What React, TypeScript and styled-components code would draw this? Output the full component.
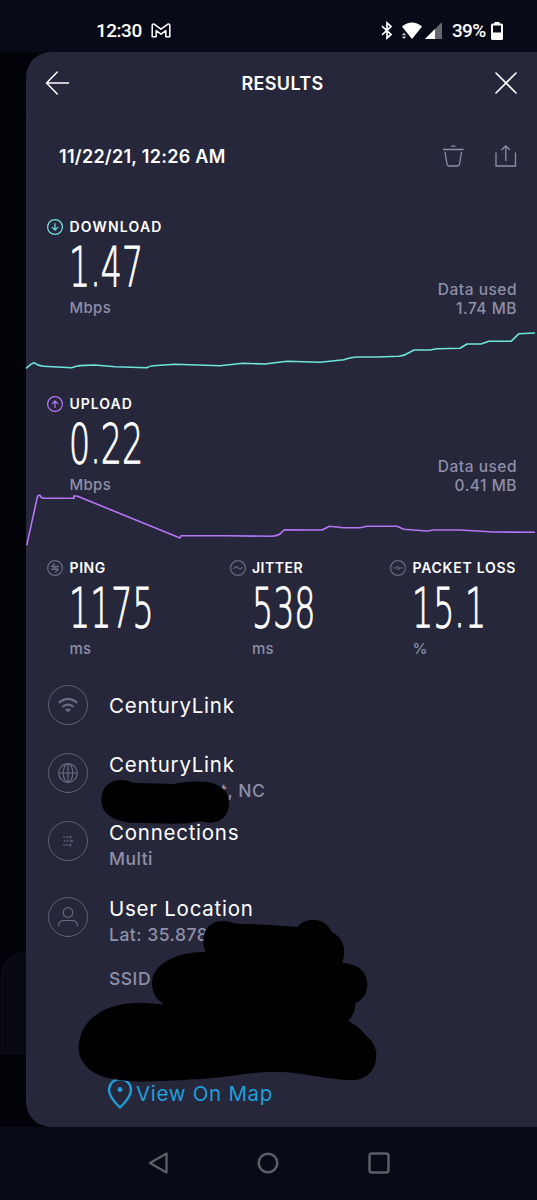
import React from "react";
import styled, { createGlobalStyle } from "styled-components";

const Global = createGlobalStyle`
  * { box-sizing: border-box; }
  body { margin: 0; background: #090a18; }
  svg { display: block; flex: none; overflow: visible; }
`;

const sans = `Inter, "Open Sans", sans-serif`;

const Phone = styled.div`
  width: 537px;
  height: 1200px;
  display: flex;
  flex-direction: column;
  overflow: hidden;
  background: #090a18;
  color: #fff;
  font-family: ${sans};
`;

const StatusBar = styled.header`
  height: 52px;
  padding: 9px 34px 0 96px;
  display: flex;
  align-items: center;
  font: 500 19px/22px Roboto, sans-serif;
`;
const Clock = styled.span`
  width: 55px;
  letter-spacing: -0.5px;
`;
const StatusIcons = styled.div`
  margin-left: auto;
  display: flex;
  align-items: center;
`;
const Battery = styled.span`
  width: 39px;
  margin-left: 10px;
  letter-spacing: -0.7px;
`;

const Stage = styled.div`
  position: relative;
  height: 1075px;
  padding-left: 26px;
  background: #020308;
`;
const BackPanel = styled.div`
  position: absolute;
  left: 1px;
  top: 900px;
  width: 60px;
  height: 102px;
  border: 1px solid #0e0f17;
  border-radius: 24px 0 0 0;
  background: #080910;
`;
const Card = styled.main`
  position: relative;
  height: 1075px;
  border-radius: 25px 0 0 25px;
  background: #26273a;
`;
const TopBar = styled.div`
  height: 63px;
  padding: 0 20px;
  display: flex;
  align-items: center;
  justify-content: space-between;
  border-bottom: 1px solid #2b2c3f;
`;
const Title = styled.h1`
  margin: 0;
  font-size: 18px;
  font-weight: 600;
  letter-spacing: 0.35px;
`;
const DateRow = styled.div`
  height: 101px;
  padding: 0 20px 19px 33px;
  display: flex;
  align-items: center;
`;
const DateText = styled.span`
  flex: 1;
  font-size: 18px;
  font-weight: 600;
  letter-spacing: 0.28px;
`;
const Actions = styled.div`
  display: flex;
  gap: 30px;
`;

const Speed = styled.section<{ $h: number }>`
  height: ${(p) => p.$h}px;
`;
const SpeedInfo = styled.div`
  height: 103px;
  padding: 0 20px 0 21px;
  display: flex;
  align-items: flex-end;
  justify-content: space-between;
`;
const Metric = styled.div`
  display: grid;
  grid-template-columns: 22.5px auto;
  grid-template-rows: 21px 59px 23px;
  align-items: center;
`;
const MetricName = styled.span<{ $spacing: number }>`
  font-size: 14px;
  font-weight: 600;
  letter-spacing: ${(p) => p.$spacing}px;
  white-space: nowrap;
`;
const MetricValue = styled.span`
  grid-column: 2;
  width: 0;
  margin-left: -0.5px;
  font: 200 55.5px/59px "DejaVu Sans", "DejaVu Sans Light", sans-serif;
  -webkit-text-stroke: 1px #fff;
  transform: scaleX(0.6);
  transform-origin: 0 50%;
  white-space: nowrap;
`;
const Unit = styled.span`
  grid-column: 2;
  padding-top: 1px;
  color: #8e8fa8;
  font-size: 15px;
  font-weight: 500;
  line-height: 22px;
  letter-spacing: 0.3px;
`;
const DataUsed = styled.div`
  padding-bottom: 1px;
  color: #8e8fa8;
  font-size: 15.5px;
  font-weight: 500;
  line-height: 19px;
  letter-spacing: 0.5px;
  text-align: right;
`;
const ChartBox = styled.div<{ $top: number }>`
  margin-top: ${(p) => p.$top}px;
`;

const Quality = styled.section`
  height: 128px;
  padding-left: 21px;
  display: grid;
  grid-template-columns: 182.5px 160.5px auto;
  align-content: start;
`;

const Details = styled.section`
  padding-left: 22px;
`;
const Detail = styled.div<{ $h: number }>`
  height: ${(p) => p.$h}px;
  display: flex;
  align-items: flex-start;
  gap: 21px;
`;
const Round = styled.div`
  width: 40px;
  height: 40px;
  display: grid;
  place-items: center;
  border: 1.5px solid #5f6177;
  border-radius: 50%;
`;
const DetailText = styled.div<{ $top: number }>`
  margin-top: ${(p) => p.$top}px;
  white-space: pre;
`;
const Name = styled.div`
  font-size: 20.5px;
  line-height: 26px;
  letter-spacing: 0.75px;
`;
const Sub = styled.div<{ $gap?: number; $indent?: number }>`
  margin-top: ${(p) => p.$gap ?? 0}px;
  padding-left: ${(p) => p.$indent ?? 0}px;
  color: #8e8fa8;
  font-size: 17.5px;
  font-weight: 500;
  line-height: 26px;
  letter-spacing: 0.5px;
`;
const MapLink = styled.a`
  margin: 6px 0 0 60px;
  display: flex;
  align-items: center;
  gap: 4px;
  color: #209fdb;
  font-size: 20.5px;
  line-height: 30px;
  letter-spacing: 0.7px;
`;
const Redaction = styled.svg`
  position: absolute;
  left: -26px;
  top: -52px;
`;

const NavBar = styled.nav`
  height: 73px;
  padding: 0 147.5px 1px 146.5px;
  display: flex;
  align-items: center;
  justify-content: space-between;
`;

const muted = "#686a80";

const Badge = ({ color, children }: { color: string; children: React.ReactNode }) => (
  <svg width="16" height="16" viewBox="0 0 16 16" fill="none" stroke={color} strokeWidth="1.2" strokeLinecap="round" strokeLinejoin="round">
    <circle cx="8" cy="8" r="7.4" />
    {children}
  </svg>
);

type MeasureProps = { icon: React.ReactNode; name: string; value: string; unit: string; spacing?: number };
const Measure = ({ icon, name, value, unit, spacing = 0.6 }: MeasureProps) => (
  <Metric>
    {icon}
    <MetricName $spacing={spacing}>{name}</MetricName>
    <MetricValue>{value}</MetricValue>
    <Unit>{unit}</Unit>
  </Metric>
);

const downloadPoints =
  "M26 368.5 Q31 363.5 34 362.7 Q38 366 43 366.3 L71.7 367.7 Q77 365.8 80 365.6 L95 365 L115 366.7 L146.7 367.7 Q150 366 153 365.7 L175 364.3 L220 365.7 L243 363.3 L265 364 L287 361.3 L320 362.3 L344 359.7 Q352 357.2 357 357 L377 357 L399 356.3 Q404 355.5 406 354.3 L414 350 L430 350 L437 348.7 L460 348.3 L467 344 L481 344 L489 341.3 L511 341.3 L519 333.7 L535 333";
const uploadPoints =
  "M26.7 545.3 L36.7 500 Q37.5 494.5 40 495.3 Q41 498.3 44 498.3 L74.3 498.3 L73.7 496 L77 496 L180 538 L181 535.7 L227 535.7 L271.7 536.3 Q277 536.3 280 534 L284.5 529.7 L322 530 L329.5 526.3 L343.7 527.7 L360 527.7 L367 526.3 L397 526.3 L403.7 529.3 L427 531 L433.7 530 L460 530 L493.7 532 L535 532.3";

export default function App() {
  return (
    <>
      <Global />
      <Phone>
        <StatusBar>
          <Clock>12:30</Clock>
          <svg width="20" height="15" viewBox="0 0 20 15" fill="none" stroke="#fff" strokeWidth="1.5" strokeLinejoin="round">
            <path d="M1.2 13.8V2.2Q1.6.6 3.4 1.3L10 6.2l6.6-4.9Q18.4.6 18.8 2.2V13.8H14.8V7.6L10 11.2 5.2 7.6V13.8Z" />
          </svg>
          <StatusIcons>
            <svg width="12" height="17" viewBox="0 0 12 17" fill="none" stroke="#fff" strokeWidth="1.7">
              <path d="M1 4.2 10 12.4 6 16V1L10 4.6 1 12.8" />
            </svg>
            <svg width="40" height="18" viewBox="0 0 40 18" style={{ marginLeft: 9 }}>
              <path d="M0 4.5Q10-3.5 20 4.5L10 17Z" fill="#fff" />
              <path d="M-.5 13.2 2 10.700l2.500 2.500ZM-.5 14.500h5L2 17Z" fill="#fff" stroke="#090a18" strokeWidth=".5" />
              <path d="M23 17 40 0V17Z" fill="#66676f" />
              <path d="M23 17 33 7V17Z" fill="#fff" />
            </svg>
            <Battery>39%</Battery>
            <svg width="12" height="18" viewBox="0 0 12 18">
              <path d="M3.5 0h5v1.5H10.500Q12 1.500 12 3V16.500Q12 18 10.500 18H1.500Q0 18 0 16.500V3Q0 1.500 1.500 1.500H3.500ZM2 3.500V10.500H10V3.500Z" fill="#fff" fillRule="evenodd" />
            </svg>
          </StatusIcons>
        </StatusBar>

        <Stage>
          <BackPanel />
          <Card>
            <TopBar>
              <svg width="24" height="24" viewBox="0 0 24 24" fill="none" stroke="#fff" strokeWidth="1.5" strokeLinecap="round" strokeLinejoin="round">
                <path d="M11.300 1 .5 12 11.300 23M.5 12H22.500" />
              </svg>
              <Title>RESULTS</Title>
              <svg width="22" height="22" viewBox="0 0 22 22" stroke="#fff" strokeWidth="1.600" strokeLinecap="round">
                <path d="M1 1 21 21M21 1 1 21" />
              </svg>
            </TopBar>

            <DateRow>
              <DateText>11/22/21, 12:26 AM</DateText>
              <Actions>
                <svg width="22" height="22" viewBox="0 0 22 22" fill="none" stroke="#8e8fa8" strokeWidth="1.300">
                  <path d="M0 4.500H20.500M8 1.200H12.500M2 7 4 19Q4.300 21 6.300 21H14.200Q16.200 21 16.500 19L18.500 7" />
                </svg>
                <svg width="22" height="22" viewBox="0 0 22 22" fill="none" stroke="#8e8fa8" strokeWidth="1.300">
                  <path d="M1 7.500V21H20.500V7.500M10.800 16V1.300M6.600 5 10.800 1 15 5" />
                </svg>
              </Actions>
            </DateRow>

            <Speed $h={177}>
              <SpeedInfo>
                <Measure
                  icon={<Badge color="#6ee6e6"><path d="M8 4.500V11M5.200 8.400 8 11.200 10.800 8.400" /></Badge>}
                  name="DOWNLOAD"
                  value="1.47"
                  unit="Mbps"
                  spacing={1.2}
                />
                <DataUsed>Data used<br />1.74 MB</DataUsed>
              </SpeedInfo>
              <ChartBox $top={8}>
                <svg width="511" height="50" viewBox="26 327 511 50" fill="none" stroke="#6ee6de" strokeWidth="1.600" strokeLinejoin="round">
                  <path d={downloadPoints} />
                </svg>
              </ChartBox>
            </Speed>

            <Speed $h={164}>
              <SpeedInfo>
                <Measure
                  icon={<Badge color="#b575f5"><path d="M8 11.500V5M5.200 7.600 8 4.800 10.800 7.600" /></Badge>}
                  name="UPLOAD"
                  value="0.22"
                  unit="Mbps"
                  spacing={1}
                />
                <DataUsed>Data used<br />0.41 MB</DataUsed>
              </SpeedInfo>
              <ChartBox $top={-3}>
                <svg width="511" height="54" viewBox="26 493 511 54" fill="none" stroke="#b575f5" strokeWidth="1.600" strokeLinejoin="round">
                  <path d={uploadPoints} />
                </svg>
              </ChartBox>
            </Speed>

            <Quality>
              <Measure
                icon={<Badge color={muted}><path d="M11.500 6.400H4.500L7.500 3.800M4.500 9.400H11.500L8.500 12M6 7.900H10" /></Badge>}
                name="PING"
                value="1175"
                unit="ms"
              />
              <Measure
                icon={<Badge color={muted}><path d="M4 8.500Q6 5.500 8 8T12 7.500" /></Badge>}
                name="JITTER"
                value="538"
                unit="ms"
                spacing={0.5}
              />
              <Measure
                icon={<Badge color={muted}><path d="M3.500 8H6L7 6.500 7.500 9.500M8.700 6.500 9.200 9.500 10 8H12.500" strokeWidth=".9" /></Badge>}
                name="PACKET LOSS"
                value="15.1"
                unit="%"
                spacing={0.75}
              />
            </Quality>

            <Details>
              <Detail $h={68}>
                <Round>
                  <svg width="20" height="16" viewBox="0 0 20 16" fill="none" stroke={muted} strokeWidth="2.200">
                    <path d="M.8 5.800Q10-2 19.200 5.800M4.500 9.800Q10 5.400 15.500 9.800" />
                    <path d="M7 12.500Q10 10.500 13 12.500L10 15.500Z" fill={muted} stroke="none" />
                  </svg>
                </Round>
                <DetailText $top={8}><Name>CenturyLink</Name></DetailText>
              </Detail>
              <Detail $h={68}>
                <Round>
                  <svg width="20" height="20" viewBox="0 0 20 20" fill="none" stroke={muted} strokeWidth="1.200">
                    <circle cx="10" cy="10" r="9.300" />
                    <ellipse cx="10" cy="10" rx="4.800" ry="9.300" />
                    <path d="M.7 10H19.300M10 .7V19.300" />
                  </svg>
                </Round>
                <DetailText $top={-1}>
                  <Name>CenturyLink</Name>
                  <Sub $indent={112}>t, NC</Sub>
                </DetailText>
              </Detail>
              <Detail $h={76}>
                <Round>
                  <svg width="12" height="12" viewBox="0 0 12 12" fill={muted} stroke={muted} strokeWidth="1">
                    <path d="M1 2H8M2 6H9.500M1 10H8" strokeDasharray="2 .8" />
                    <path d="M8 .8 9.500 2 8 3.200ZM9.500 4.800 11 6 9.500 7.200ZM8 8.800 9.500 10 8 11.200Z" strokeWidth=".4" />
                  </svg>
                </Round>
                <DetailText $top={-1}>
                  <Name>Connections</Name>
                  <Sub>Multi</Sub>
                </DetailText>
              </Detail>
              <Detail $h={176}>
                <Round>
                  <svg width="20" height="20" viewBox="0 0 20 20" fill="none" stroke={muted} strokeWidth="1.200" strokeLinecap="round">
                    <circle cx="10" cy="5.500" r="4.800" />
                    <path d="M.7 19V17.500Q1.500 13.500 6 13.500H14Q18.500 13.500 19.300 17.500V19" />
                  </svg>
                </Round>
                <DetailText $top={-1}>
                  <Name>User Location</Name>
                  <Sub>Lat: 35.878</Sub>
                  <Sub $gap={18}>SSID</Sub>
                </DetailText>
              </Detail>
              <MapLink>
                <svg width="24" height="30" viewBox="0 0 24 30" fill="none" stroke="#209fdb" strokeWidth="2.300">
                  <path d="M12 28.500Q1 18 1 11A11 11 0 0 1 23 11Q23 18 12 28.500Z" />
                  <circle cx="12" cy="10.500" r="2.400" fill="#209fdb" stroke="none" />
                </svg>
                View On Map
              </MapLink>
            </Details>

            <Redaction width="537" height="1200" viewBox="0 0 1611 3600">
              <path
                transform="translate(0 2220)"
                d="M304 180C304 140 330 120 365 120C385 120 390 128 410 129L520 132C560 125 610 120 645 132C675 142 687 165 687 190C687 230 660 248 630 249C600 242 590 244 565 250C500 253 450 248 390 248C340 242 304 220 304 180Z"
              />
              <path
                transform="translate(180 2670)"
                d="M430 150C430 115 455 93 490 93C515 95 525 102 545 102C600 102 660 107 712 111C725 95 740 89 762 89C790 90 808 108 815 126C845 140 853 165 853 190C852 200 850 210 846 218C895 222 922 245 922 283C922 312 908 330 886 340C886 365 876 382 864 392C890 405 905 420 920 438C940 455 949 475 949 495C948 540 920 570 875 571C800 568 740 552 680 547C600 542 540 555 480 562C400 570 320 573 250 575C200 574 160 568 130 560C85 545 56 515 56 475C56 400 120 338 240 338C270 338 290 342 312 343C290 330 276 308 276 280C276 225 345 185 437 186C432 175 429 165 430 150Z"
              />
            </Redaction>
          </Card>
        </Stage>

        <NavBar>
          <svg width="22" height="22" viewBox="0 0 22 22" fill="none" stroke="#5d5e66" strokeWidth="2.300" strokeLinejoin="round">
            <path d="M3 11 19.500 1.500V20.500Z" />
          </svg>
          <svg width="22" height="22" viewBox="0 0 22 22" fill="none" stroke="#5d5e66" strokeWidth="2.500">
            <circle cx="11" cy="11" r="9.300" />
          </svg>
          <svg width="22" height="22" viewBox="0 0 22 22" fill="none" stroke="#5d5e66" strokeWidth="2.500">
            <rect x="1.500" y="1.500" width="19" height="19" rx="2.500" />
          </svg>
        </NavBar>
      </Phone>
    </>
  );
}
